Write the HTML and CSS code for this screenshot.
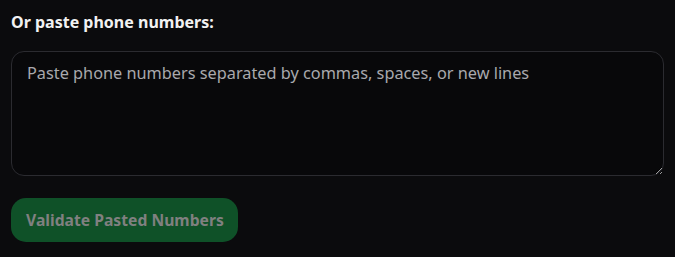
FILE: index.html
```html
<!DOCTYPE html>
<html lang="en">
<head>
    <meta charset="UTF-8">
    <meta name="viewport" content="width=device-width, initial-scale=1.0">
    <title>Paste Numbers</title>
    <link rel="stylesheet" href="styles.css">
</head>
<body>
    <div class="paste-section">
        <label class="paste-label" for="pasted">Or paste phone numbers:</label>
        <textarea id="pasted" class="paste-box" placeholder="Paste phone numbers separated by commas, spaces, or new lines"></textarea>
        <button class="validate-btn" disabled>Validate Pasted Numbers</button>
    </div>
</body>
</html>
```

FILE: styles.css
```css
body, html {
    margin: 0;
    padding: 0;
    background-color: #0b0b0d;
}
.paste-section {
    display: flex;
    flex-direction: column;
    align-items: flex-start;
    padding: 11px 11px;
    font-family: "Noto Sans", sans-serif;
}
.paste-label {
    color: #f2f2f2;
    font-size: 16px;
    font-weight: 700;
    line-height: 22px;
    margin-bottom: 18px;
}
.paste-box {
    box-sizing: border-box;
    width: 653px;
    height: 125px;
    background-color: #08080a;
    border: 1px solid #2b2b30;
    border-radius: 13px;
    padding: 9px 15px;
    color: #e6e6e6;
    font-family: "Noto Sans", sans-serif;
    font-size: 16.3px;
    line-height: 24px;
    resize: vertical;
    outline: none;
}
.paste-box::placeholder {
    color: #a9a9ad;
}
.validate-btn {
    margin-top: 22px;
    height: 44px;
    padding: 0 14px 0 15px;
    border: none;
    border-radius: 15px;
    background-color: #0f5128;
    color: #808080;
    font-family: "Noto Sans", sans-serif;
    font-size: 15.7px;
    font-weight: 700;
}
```
